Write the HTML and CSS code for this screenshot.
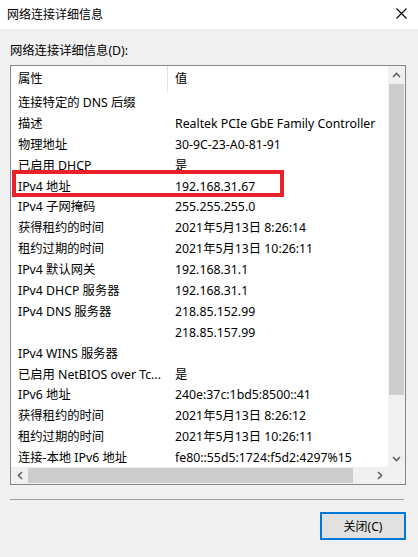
FILE: index.html
```html
<!DOCTYPE html>
<html lang="zh-CN">
<head>
<meta charset="utf-8">
<title>网络连接详细信息</title>
<link rel="stylesheet" href="styles.css">
</head>
<body>
<div class="window">
  <div class="titlebar">
    <span class="title">网络连接详细信息</span>
    <svg class="close" width="11" height="11" viewBox="0 0 11 11"><path d="M0.5 0.5 L10.5 10.5 M10.5 0.5 L0.5 10.5" stroke="#000" stroke-width="1.1" fill="none"/></svg>
  </div>
  <div class="content">
    <div class="label">网络连接详细信息(D):</div>
    <div class="listbox">
      <div class="list">
        <div class="header">
          <div class="hcell c1">属性</div>
          <div class="hcell c2">值</div>
        </div>
        <div class="row"><span class="c1">连接特定的 DNS 后缀</span><span class="c2"></span></div>
        <div class="row"><span class="c1">描述</span><span class="c2">Realtek PCIe GbE Family Controller</span></div>
        <div class="row"><span class="c1">物理地址</span><span class="c2">30-9C-23-A0-81-91</span></div>
        <div class="row"><span class="c1">已启用 DHCP</span><span class="c2">是</span></div>
        <div class="row"><span class="c1">IPv4 地址</span><span class="c2">192.168.31.67</span></div>
        <div class="row"><span class="c1">IPv4 子网掩码</span><span class="c2">255.255.255.0</span></div>
        <div class="row"><span class="c1">获得租约的时间</span><span class="c2">2021年5月13日 8:26:14</span></div>
        <div class="row"><span class="c1">租约过期的时间</span><span class="c2">2021年5月13日 10:26:11</span></div>
        <div class="row"><span class="c1">IPv4 默认网关</span><span class="c2">192.168.31.1</span></div>
        <div class="row"><span class="c1">IPv4 DHCP 服务器</span><span class="c2">192.168.31.1</span></div>
        <div class="row"><span class="c1">IPv4 DNS 服务器</span><span class="c2">218.85.152.99</span></div>
        <div class="row"><span class="c1"></span><span class="c2">218.85.157.99</span></div>
        <div class="row"><span class="c1">IPv4 WINS 服务器</span><span class="c2"></span></div>
        <div class="row"><span class="c1">已启用 NetBIOS over Tc...</span><span class="c2">是</span></div>
        <div class="row"><span class="c1">IPv6 地址</span><span class="c2">240e:37c:1bd5:8500::41</span></div>
        <div class="row"><span class="c1">获得租约的时间</span><span class="c2">2021年5月13日 8:26:12</span></div>
        <div class="row"><span class="c1">租约过期的时间</span><span class="c2">2021年5月13日 10:26:11</span></div>
        <div class="row"><span class="c1">连接-本地 IPv6 地址</span><span class="c2">fe80::55d5:1724:f5d2:4297%15</span></div>
      </div>
      <div class="vscroll">
        <div class="sbtn"><svg width="9" height="6" viewBox="0 0 9 6"><polyline points="1,5 4.5,1.5 8,5" stroke="#606060" stroke-width="1.6" fill="none"/></svg></div>
        <div class="vthumb"></div>
        <div class="vtrack"></div>
        <div class="sbtn"><svg width="9" height="6" viewBox="0 0 9 6"><polyline points="1,1 4.5,4.5 8,1" stroke="#606060" stroke-width="1.6" fill="none"/></svg></div>
      </div>
      <div class="hscroll">
        <div class="sbtn"><svg width="6" height="9" viewBox="0 0 6 9"><polyline points="5,1 1.5,4.5 5,8" stroke="#606060" stroke-width="1.6" fill="none"/></svg></div>
        <div class="hthumb"></div>
        <div class="htrack"></div>
        <div class="sbtn"><svg width="6" height="9" viewBox="0 0 6 9"><polyline points="1,1 4.5,4.5 1,8" stroke="#606060" stroke-width="1.6" fill="none"/></svg></div>
      </div>
      <div class="corner"></div>
    </div>
    <div class="separator"></div>
    <div class="footer">
      <button class="btn">关闭(C)</button>
    </div>
  </div>
  <div class="highlight"></div>
</div>
</body>
</html>
```

FILE: styles.css
```css
html, body {
  margin: 0;
  padding: 0;
}
body {
  width: 418px;
  height: 557px;
  background: #f0f0f0;
  font-family: "Noto Sans", "Noto Sans CJK SC", sans-serif;
  font-size: 12px;
  color: #000;
  overflow: hidden;
}
.window {
  position: relative;
  width: 418px;
  height: 557px;
}
.titlebar {
  height: 29px;
  background: #fff;
  display: flex;
  align-items: center;
  justify-content: space-between;
  padding: 0 11px 0 7px;
}
.title {
  font-size: 12px;
  line-height: 16px;
}
.close {
  display: block;
  margin-top: -3px;
}
.content {
  padding: 0 12px 0 10px;
}
.label {
  margin-top: 14px;
  height: 16px;
  line-height: 16px;
  margin-bottom: 6px;
  font-size: 12.3px;
}
.listbox {
  width: 394px;
  height: 418px;
  border: 1px solid #828790;
  background: #fff;
  display: grid;
  grid-template-columns: 377px 17px;
  grid-template-rows: 401px 17px;
  font-size: 12.3px;
}
.list {
  overflow: hidden;
}
.header {
  display: flex;
  height: 27px;
  align-items: center;
}
.hcell {
  line-height: 26px;
  height: 27px;
}
.header .c1 {
  width: 149px;
  padding-left: 7px;
  border-right: 1px solid #e5e5e5;
}
.header .c2 {
  padding-left: 7px;
}
.row {
  display: flex;
  height: 20.9px;
  line-height: 20.9px;
  white-space: nowrap;
}
.row .c1 {
  width: 150px;
  padding-left: 7px;
  overflow: hidden;
}
.row .c2 {
  padding-left: 7px;
  overflow: hidden;
  flex: 1;
}
.vscroll {
  background: #f0f0f0;
  display: flex;
  flex-direction: column;
}
.hscroll {
  background: #f0f0f0;
  display: flex;
}
.sbtn {
  width: 17px;
  height: 17px;
  flex: none;
  display: flex;
  align-items: center;
  justify-content: center;
}
.vthumb {
  height: 311px;
  background: #cdcdcd;
  margin: 1px 1px 0 1px;
}
.vtrack {
  flex: 1;
}
.hthumb {
  width: 325px;
  background: #cdcdcd;
  margin: 1px 0 1px 0;
}
.htrack {
  flex: 1;
}
.corner {
  background: #f0f0f0;
}
.separator {
  margin-top: 14px;
  height: 1px;
  width: 394px;
  background: #a0a0a0;
}
.footer {
  display: flex;
  justify-content: flex-end;
  padding-top: 12px;
}
.btn {
  width: 86px;
  height: 28px;
  border: 2px solid #0078d7;
  background: #e1e1e1;
  font-family: "Noto Sans", "Noto Sans CJK SC", sans-serif;
  font-size: 12px;
  color: #000;
  padding: 0;
  margin: 0;
}
.highlight {
  position: absolute;
  left: 12px;
  top: 170px;
  width: 264px;
  height: 19px;
  border: 4px solid #e8212b;
}
```
